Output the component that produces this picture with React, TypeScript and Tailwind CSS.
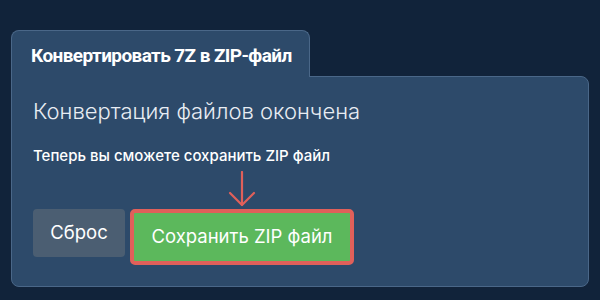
export default function App() {
  return (
    <div className="w-[600px] h-[300px] bg-[#11233a] pt-[30px] pl-[11px] pr-[11px] font-['Inter',sans-serif]">
      {/* tab */}
      <div className="relative z-10 w-[299px] h-[47px] -mb-px bg-[#2d4a6a] border border-b-0 border-[#4a6788] rounded-t-lg flex items-center pl-[19px] pt-[4px]">
        <span className="font-['Roboto',sans-serif] font-bold text-[19px] tracking-[-0.6px] text-white">Конвертировать 7Z в ZIP-файл</span>
      </div>

      {/* card */}
      <div className="h-[211px] bg-[#2d4a6a] border border-[#4a6788] rounded-b-lg rounded-tr-lg pl-[21px] pt-[19px]">
        <h2 className="text-[22px] font-light text-[#e8edf3] leading-[30px]">Конвертация файлов окончена</h2>
        <p className="mt-[20px] text-[15px] font-medium text-white leading-[20px]">Теперь вы сможете сохранить ZIP файл</p>

        <div className="mt-[43px] flex items-start gap-[5px]">
          <button className="h-[48px] w-[92px] rounded bg-[#4b5e72] text-white text-[18.5px]">Сброс</button>
          <div className="relative">
            <svg className="absolute left-1/2 -translate-x-1/2 -top-[38px]" width="28" height="36" viewBox="0 0 28 36" fill="none" stroke="#e0605a" strokeWidth="2.2" strokeLinecap="round" strokeLinejoin="round">
              <path d="M14 1 V34" />
              <path d="M2 22 L14 34 L26 22" />
            </svg>
            <button className="h-[56px] w-[224px] rounded-[5px] border-[4px] border-[#e0605a] bg-[#5cb85c] text-white text-[18.5px]">Сохранить ZIP файл</button>
          </div>
        </div>
      </div>
    </div>
  );
}
